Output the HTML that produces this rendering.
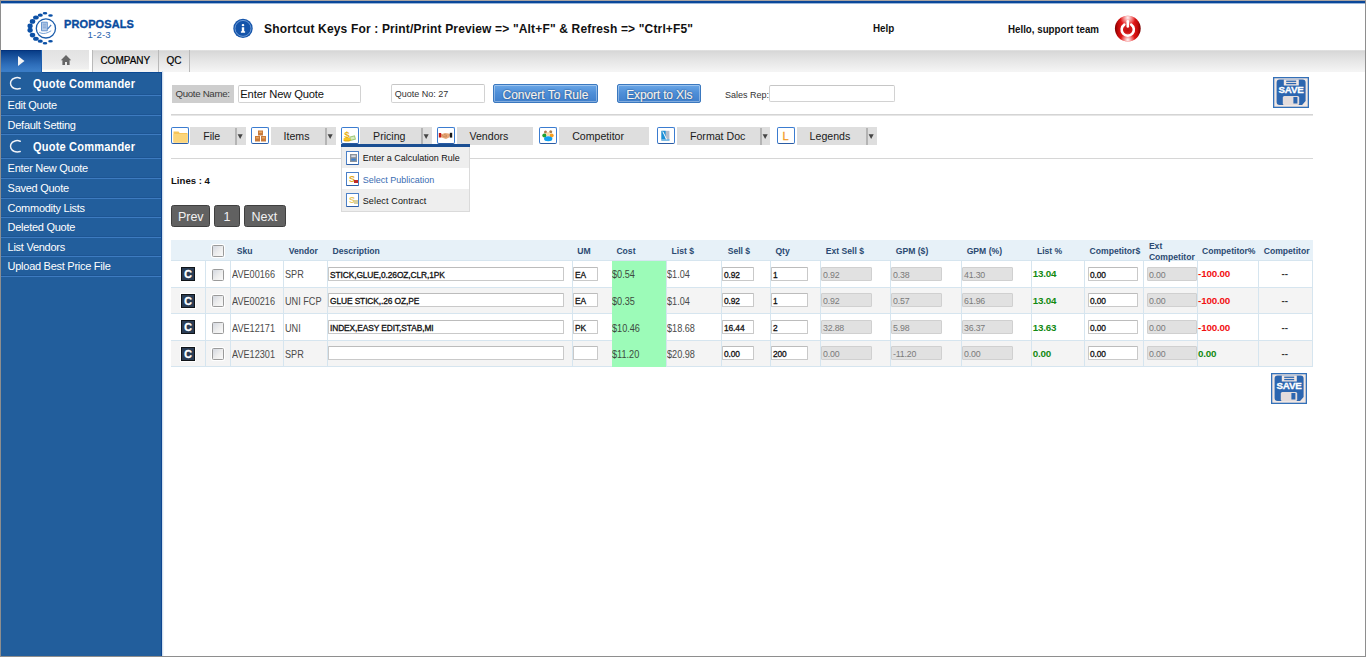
<!DOCTYPE html>
<html><head><meta charset="utf-8">
<style>
*{box-sizing:border-box;margin:0;padding:0}
html,body{width:1366px;height:657px;overflow:hidden;background:#fff}
body{position:relative;font-family:"Liberation Sans",sans-serif;color:#000}
.a{position:absolute}
.t{position:absolute;white-space:nowrap;line-height:1}
/* frame */
#fr{left:0;top:0;width:1366px;height:657px;border:1px solid #8e8e8e;border-top-color:#a9a3a1}
#topbar{left:1px;top:1px;width:1364px;height:2px;background:#0a4799}
#topbar2{left:1px;top:3px;width:1364px;height:1px;background:#9bb7da}
/* nav */
#nav{left:1px;top:50px;width:1364px;height:22px;background:linear-gradient(#e4e4e4 0px,#d7d7d7 1.5px,#dcdcdc 4px,#e6e6e6 11px,#f0f0f0 18px,#f4f4f4 21px)}
#navblue{left:1px;top:50px;width:41px;height:22px;background:linear-gradient(#022c74 0px,#093f8a 1.5px,#1d57a2 8px,#2f6fbb 15px,#3a7cc6 20px,#3a7cc6 22px);box-shadow:inset -1px 0 0 #1f5fae}
#navhome{left:42px;top:50px;width:47px;height:22px;background:linear-gradient(#e2e2e2,#e8e8e8 50%,#f0f0f0 19px,#fcfcf6 20px)}
#navgap{left:89px;top:50px;width:3px;height:22px;background:#fff}
.nsep{position:absolute;top:50px;width:1px;height:22px;background:#b9b9b9}
/* sidebar */
#side{left:1px;top:72px;width:161px;height:584px;background:#225e9c;border-right:1px solid #0d4590}
.sl{position:absolute;left:1px;width:160px;height:1px;background:#3d7bc0}
.sd{position:absolute;left:1px;width:160px;height:1px;background:#1d5593}
.st{position:absolute;white-space:nowrap;line-height:1;color:#fff;font-size:11px;left:7.6px;letter-spacing:-0.27px}
.sh{position:absolute;white-space:nowrap;line-height:1;color:#fff;font-size:12px;font-weight:bold;left:33.2px;letter-spacing:0.2px;transform:scaleX(0.92);transform-origin:0 0}
</style></head><body>
<div id="fr" class="a"></div>
<div id="topbar" class="a"></div>
<div id="topbar2" class="a"></div>

<!-- logo -->
<svg class="a" style="left:24px;top:8px" width="40" height="40" viewBox="0 0 40 40">
 <g fill="#0b50a6">
  <ellipse cx="21" cy="5.2" rx="2.31" ry="1.27"/>
  <ellipse cx="26.5" cy="7.6" rx="2.31" ry="1.27"/>
  <ellipse cx="16.3" cy="7.2" rx="2.53" ry="1.58"/>
  <ellipse cx="11.9" cy="9.6" rx="2.84" ry="2.01"/>
  <ellipse cx="8.5" cy="13.4" rx="2.74" ry="2.33"/>
  <ellipse cx="6.1" cy="18" rx="2.63" ry="2.43"/>
  <ellipse cx="6.1" cy="22.3" rx="2.63" ry="2.43"/>
  <ellipse cx="8.5" cy="27.1" rx="2.74" ry="2.33"/>
  <ellipse cx="11.9" cy="30.8" rx="2.84" ry="2.01"/>
  <ellipse cx="16.3" cy="33.2" rx="2.53" ry="1.58"/>
  <ellipse cx="21" cy="35.3" rx="2.31" ry="1.27"/>
  <ellipse cx="26.5" cy="33.2" rx="2.31" ry="1.27"/>
 </g>
 <circle cx="21.9" cy="20.4" r="9.6" fill="none" stroke="#1a5cab" stroke-width="1.3"/>
 <g fill="none" stroke="#5a8ccc" stroke-width="0.9">
  <path d="M17.5 14.2h5.8v8.6h-5.8z" fill="#b8cde8"/>
  <path d="M18.8 16.2h3.3M18.8 18h3.3M18.8 19.8h3.3" stroke="#7a9ed0"/>
  <path d="M15.2 24.2c2 1.6 5.5 1.8 9 .2l3-1.6" stroke="#6a98d0"/>
  <path d="M23.5 21.2l3.6-4.2" stroke="#4a7cc0" stroke-width="1.2"/>
 </g>
</svg>
<div class="t" style="left:64px;top:19.4px;font-size:11px;font-weight:bold;color:#0a4c9e;letter-spacing:0.1px;-webkit-text-stroke:0.35px #0a4c9e">PROPOSALS</div>
<div class="t" style="left:87.6px;top:30.2px;font-size:9.6px;color:#2a64ac;letter-spacing:0.15px">1-2-3</div>

<!-- info icon -->
<svg class="a" style="left:232px;top:18px" width="22" height="22" viewBox="0 0 22 22">
 <circle cx="11" cy="10.4" r="9.7" fill="#1454aa"/>
 <circle cx="11" cy="10.4" r="8" fill="none" stroke="#8fb4e4" stroke-width="0.7"/>
 <ellipse cx="11" cy="7.2" rx="1.3" ry="1.1" fill="#fff"/>
 <path d="M9.8 9.2h2.4v4h0.9v1.5H8.9v-1.5h0.9z" fill="#fff"/>
</svg>
<div class="t" style="left:264px;top:23.2px;font-size:12px;font-weight:bold;color:#111;letter-spacing:0.16px">Shortcut Keys For : Print/Print Preview =&gt; "Alt+F" &amp; Refresh =&gt; "Ctrl+F5"</div>
<div class="t" style="left:873.4px;top:22.6px;font-size:11px;font-weight:bold;color:#111;transform:scaleX(0.895);transform-origin:0 0">Help</div>
<div class="t" style="left:1007.8px;top:23.8px;font-size:10.6px;font-weight:bold;color:#111;transform:scaleX(0.92);transform-origin:0 0">Hello, support team</div>
<!-- power -->
<svg class="a" style="left:1114px;top:15px" width="28" height="28" viewBox="0 0 28 28">
 <defs>
  <linearGradient id="ph" x1="0" y1="0" x2="1" y2="0">
   <stop offset="0" stop-color="#7a0000"/>
   <stop offset="0.12" stop-color="#c00808"/>
   <stop offset="0.3" stop-color="#e81a1a"/>
   <stop offset="0.5" stop-color="#f03030"/>
   <stop offset="0.7" stop-color="#e81a1a"/>
   <stop offset="0.88" stop-color="#c00808"/>
   <stop offset="1" stop-color="#7a0000"/>
  </linearGradient>
  <radialGradient id="pt" cx="50%" cy="8%" r="30%">
   <stop offset="0" stop-color="#fff" stop-opacity="0.95"/>
   <stop offset="1" stop-color="#fff" stop-opacity="0"/>
  </radialGradient>
  <radialGradient id="pb" cx="50%" cy="94%" r="28%">
   <stop offset="0" stop-color="#fff" stop-opacity="0.95"/>
   <stop offset="1" stop-color="#fff" stop-opacity="0"/>
  </radialGradient>
  <radialGradient id="pc" cx="50%" cy="55%" r="40%">
   <stop offset="0" stop-color="#b80c0c"/>
   <stop offset="1" stop-color="#d81818" stop-opacity="0"/>
  </radialGradient>
 </defs>
 <circle cx="13.8" cy="13.6" r="12.9" fill="url(#ph)"/>
 <circle cx="13.8" cy="13.6" r="12.9" fill="url(#pc)"/>
 <circle cx="13.8" cy="13.6" r="12.9" fill="url(#pt)"/>
 <circle cx="13.8" cy="13.6" r="12.9" fill="url(#pb)"/>
 <path d="M10.3 9.6a6.1 6.1 0 1 0 6.9 0" fill="none" stroke="#fff" stroke-width="2.6" stroke-linecap="round"/>
 <path d="M13.8 6.2v5.2" stroke="#fff" stroke-width="2.6" stroke-linecap="round"/>
</svg>

<!-- nav -->
<div id="nav" class="a"></div>
<div id="navblue" class="a"></div>
<svg class="a" style="left:17px;top:55px" width="9" height="12" viewBox="0 0 9 12"><path d="M1 1l6.5 5-6.5 5z" fill="#f4f4f4"/></svg>
<div id="navhome" class="a"></div>
<svg class="a" style="left:60px;top:54px" width="12" height="12" viewBox="0 0 12 12"><path d="M6 1L0.8 6.2h1.6V11h2.6V8h2v3h2.6V6.2h1.6z" fill="#666"/></svg>
<div id="navgap" class="a"></div>
<div class="nsep" style="left:92px"></div>
<div class="nsep" style="left:158px"></div>
<div class="nsep" style="left:189px"></div>
<div class="t" style="left:100.4px;top:56.3px;font-size:10px;color:#000;-webkit-text-stroke:0.2px #000">COMPANY</div>
<div class="t" style="left:166.4px;top:56.3px;font-size:10px;color:#000;-webkit-text-stroke:0.2px #000">QC</div>

<!-- sidebar -->
<div id="side" class="a"></div>
<div class="a" style="left:42px;top:72px;width:119px;height:1px;background:#0b4a94"></div>
<div class="a" style="left:162px;top:71px;width:1px;height:585px;background:#d2e0ee"></div><div class="a" style="left:163px;top:71px;width:1px;height:585px;background:#f1f5fa"></div>
<div class="sd" style="top:94px"></div><div class="sl" style="top:95px"></div>
<div class="sd" style="top:114px"></div><div class="sl" style="top:115px"></div>
<div class="sd" style="top:133px"></div><div class="sl" style="top:134px"></div>
<div class="sd" style="top:157px"></div><div class="sl" style="top:158px"></div>
<div class="sd" style="top:177px"></div><div class="sl" style="top:178px"></div>
<div class="sd" style="top:197px"></div><div class="sl" style="top:198px"></div>
<div class="sd" style="top:216px"></div><div class="sl" style="top:217px"></div>
<div class="sd" style="top:236px"></div><div class="sl" style="top:237px"></div>
<div class="sd" style="top:255px"></div><div class="sl" style="top:256px"></div>
<div class="sd" style="top:275px"></div><div class="sl" style="top:276px"></div>
<svg class="a" style="left:8px;top:75px" width="15" height="16" viewBox="0 0 15 16"><path d="M12.2 3.2C9 2 4.5 2.6 2.9 6.2 1.8 8.8 3 12 6 13.3 8 14.1 10.5 14 12.2 13.6" fill="none" stroke="#f2f4f8" stroke-width="1.5" stroke-linecap="round"/></svg>
<svg class="a" style="left:8px;top:138px" width="15" height="16" viewBox="0 0 15 16"><path d="M12.2 3.2C9 2 4.5 2.6 2.9 6.2 1.8 8.8 3 12 6 13.3 8 14.1 10.5 14 12.2 13.6" fill="none" stroke="#f2f4f8" stroke-width="1.5" stroke-linecap="round"/></svg>
<div class="sh" style="top:77.7px">Quote Commander</div>
<div class="st" style="top:99.5px">Edit Quote</div>
<div class="st" style="top:119.5px">Default Setting</div>
<div class="sh" style="top:141.1px">Quote Commander</div>
<div class="st" style="top:162.5px">Enter New Quote</div>
<div class="st" style="top:182.5px">Saved Quote</div>
<div class="st" style="top:202.5px">Commodity Lists</div>
<div class="st" style="top:221.5px">Deleted Quote</div>
<div class="st" style="top:241.5px">List Vendors</div>
<div class="st" style="top:260.5px">Upload Best Price File</div>

<!-- CONTENT -->
<style>
.lbl{position:absolute;background:#cecece}
.inp{position:absolute;background:#fff;border:1px solid #d2d2d2;border-top-color:#c6c6c6;border-radius:2px}
.btnb{position:absolute;border:1px solid #3a78bf;border-radius:2px;background:linear-gradient(#6aa6e6,#4f8fd8 45%,#3f7fcc);box-shadow:inset 0 0 0 1px rgba(255,255,255,0.35)}
.bt{position:absolute;white-space:nowrap;line-height:1;color:#f4f4f4;font-size:12px;text-shadow:0 0 1.5px #17457f,0 0 1px #17457f;-webkit-text-stroke:0.2px #f4f4f4}
.hr{position:absolute;left:171px;width:1142px;height:2px;background:linear-gradient(#d4d4d4 50%,#e6e6e6 50%)}
.ib{position:absolute;width:17.5px;height:17.4px;border:1.2px solid #3b7cd0;border-bottom:1.6px solid #2a5ca4;border-radius:2px;background:#fff}
.tb{position:absolute;top:127px;height:18px;background:#dedede}
.tsep{position:absolute;top:128px;width:2px;height:17px;background:#b4b4b4}
.arr{position:absolute;top:134px;width:0;height:0;margin-left:1.3px;border-left:2.6px solid transparent;border-right:2.6px solid transparent;border-top:5px solid #454545}
.tt{position:absolute;white-space:nowrap;line-height:1;color:#1a1a1a;font-size:10.6px}
.mi{position:absolute;left:342px;width:127px}
.mic{position:absolute;left:346px;width:13px;height:13.5px;border:1px solid #4a80c8;border-bottom:1.5px solid #2c5ea6;border-radius:1px;background:#fff}
.mt{position:absolute;white-space:nowrap;line-height:1;font-size:9px;color:#111}
.pg{position:absolute;top:205px;height:22px;background:#616161;border:1px solid #3f3f3f;border-radius:2.5px}
.pt{position:absolute;white-space:nowrap;line-height:1;color:#f2f2f2;font-size:12.5px}
</style>
<!-- row 1 -->
<div class="lbl" style="left:172px;top:85px;width:62px;height:18px"></div>
<div class="t" style="left:175.4px;top:89.1px;font-size:9.7px;color:#3a3a3a;letter-spacing:-0.3px">Quote Name:</div>
<div class="inp" style="left:238px;top:85px;width:123px;height:18px"></div>
<div class="t" style="left:240.3px;top:88.9px;font-size:11.2px;color:#111;letter-spacing:-0.15px">Enter New Quote</div>
<div class="inp" style="left:391px;top:84px;width:94px;height:19px"></div>
<div class="t" style="left:394.8px;top:89.8px;font-size:9px;color:#333">Quote No: 27</div>
<div class="btnb" style="left:493px;top:84px;width:105px;height:19px"></div>
<div class="bt" style="left:502.5px;top:89.1px">Convert To Rule</div>
<div class="btnb" style="left:617px;top:84px;width:84px;height:19px"></div>
<div class="bt" style="left:626.2px;top:89.1px;letter-spacing:-0.15px">Export to Xls</div>
<div class="t" style="left:725px;top:90.8px;font-size:9px;color:#333">Sales Rep:</div>
<div class="inp" style="left:769px;top:85px;width:126px;height:17px"></div>
<svg class="a save" style="left:1273px;top:77px" width="36" height="31" viewBox="0 0 36 31">
 <rect x="0.5" y="0.5" width="35" height="30" fill="#f1e7e3" stroke="#3370b8" stroke-width="1.6"/>
 <path d="M3.6 5.5a3 3 0 0 1 3-3h23a3 3 0 0 1 3 3V24l-3.5 3.9H6.6a3 3 0 0 1-3-3z" fill="#2c66b0"/>
 <rect x="10.8" y="2.5" width="15" height="6" fill="#f1e7e3"/>
 <rect x="13.2" y="3.6" width="10" height="1.3" fill="#2c66b0"/>
 <rect x="13.2" y="5.9" width="10" height="1.3" fill="#2c66b0"/>
 <rect x="9.8" y="19" width="16.4" height="8.9" rx="1.5" fill="#e3dcdc"/>
 <rect x="20.4" y="20" width="4" height="6.5" fill="#2c66b0"/>
 <text x="18" y="16.4" text-anchor="middle" font-family="Liberation Sans" font-weight="bold" font-size="9.8" fill="#fff" stroke="#fff" stroke-width="0.3" letter-spacing="-0.3">SAVE</text>
</svg>
<div class="hr" style="top:114px"></div>

<!-- toolbar -->
<div class="tb" style="left:190px;width:56px"></div>
<div class="tsep" style="left:235px"></div>
<svg class="a" style="left:235px;top:133px" width="10" height="8" viewBox="0 0 10 8"><path d="M2.6 1.2h5.1L5.15 6z" fill="#454545"/></svg>
<div class="ib" style="left:171px;top:127px"><svg class="a" style="left:1px;top:2px" width="15" height="13" viewBox="0 0 15 13"><path d="M0.5 1.5h5l1.2 1.5H14.5v9.5H0.5z" fill="#f7c55a"/><path d="M0.5 4h14v8.5H0.5z" fill="#fbd57a"/></svg></div>
<div class="tt" style="left:203.2px;top:130.9px">File</div>
<div class="tb" style="left:271px;width:65px"></div>
<div class="tsep" style="left:325px"></div>
<svg class="a" style="left:325px;top:133px" width="10" height="8" viewBox="0 0 10 8"><path d="M2.6 1.2h5.1L5.15 6z" fill="#454545"/></svg>
<div class="ib" style="left:251px;top:127px"><svg class="a" style="left:1px;top:1px" width="15" height="14" viewBox="0 0 15 14"><g fill="#c77a3c"><rect x="5" y="1.5" width="5" height="5"/><rect x="2" y="7" width="5" height="5.5"/><rect x="8" y="7" width="5" height="5.5"/></g><g fill="#e9a35e"><rect x="6" y="2.5" width="3" height="1.5"/><rect x="3" y="8" width="3" height="1.5"/><rect x="9" y="8" width="3" height="1.5"/></g></svg></div>
<div class="tt" style="left:283.6px;top:130.9px">Items</div>
<div class="tb" style="left:360px;width:72px"></div>
<div class="tsep" style="left:421px"></div>
<svg class="a" style="left:421px;top:133px" width="10" height="8" viewBox="0 0 10 8"><path d="M2.6 1.2h5.1L5.15 6z" fill="#454545"/></svg>
<div class="ib" style="left:341px;top:127px"><svg class="a" style="left:0px;top:0px" width="15" height="15" viewBox="0 0 15 15"><rect x="7.5" y="8" width="6" height="4.5" fill="#9fc87a" transform="rotate(-15 10 10)"/><rect x="8.5" y="9" width="4" height="2.5" fill="#d8ecc0" transform="rotate(-15 10 10)"/><ellipse cx="5" cy="12.3" rx="3.6" ry="1.3" fill="#e8a810"/><ellipse cx="5" cy="11" rx="3.6" ry="1.3" fill="#f8c820"/><text x="2.2" y="9.6" font-family="Liberation Sans" font-weight="bold" font-size="9.5" fill="#e8b010">$</text></svg></div>
<div class="tt" style="left:373.1px;top:130.9px">Pricing</div>
<div class="tb" style="left:457px;width:76px"></div>
<div class="ib" style="left:437px;top:127px"><svg class="a" style="left:0px;top:2px" width="15" height="12" viewBox="0 0 15 12"><path d="M1.5 3.5l2.5 0.5 3-1 3.5 0.5 2 1-1.5 3-3 1.5-3-1-3.5-1.5z" fill="#e8a878"/><path d="M4 5.5l3 1.5 2-0.5M6 4.5l3 1" stroke="#b87848" stroke-width="0.6" fill="none"/><path d="M0.8 3h2.4v4.5H0.8z" fill="#c01818"/><path d="M11.8 2.8h2.4v4.8h-2.4z" fill="#181818"/></svg></div>
<div class="tt" style="left:469.5px;top:130.9px">Vendors</div>
<div class="tb" style="left:559px;width:90px"></div>
<div class="ib" style="left:539px;top:127px"><svg class="a" style="left:0px;top:0px" width="15" height="15" viewBox="0 0 15 15"><circle cx="5.5" cy="3.9" r="1.5" fill="#b07850"/><circle cx="10.7" cy="3.8" r="1.5" fill="#a88050"/><circle cx="4.4" cy="7.5" r="2.1" fill="#20a030"/><circle cx="11.6" cy="7.5" r="2.1" fill="#f8a020"/><circle cx="8" cy="6" r="2" fill="#f8d8a8"/><ellipse cx="8.2" cy="10.8" rx="4.2" ry="2.5" fill="#10a0f0"/></svg></div>
<div class="tt" style="left:572.2px;top:130.9px">Competitor</div>
<div class="tb" style="left:677px;width:93px"></div>
<div class="tsep" style="left:760px"></div>
<svg class="a" style="left:760px;top:133px" width="10" height="8" viewBox="0 0 10 8"><path d="M2.6 1.2h5.1L5.15 6z" fill="#454545"/></svg>
<div class="ib" style="left:657px;top:127px"><svg class="a" style="left:0px;top:0px" width="15" height="15" viewBox="0 0 15 15"><rect x="3.4" y="2.8" width="8" height="10" fill="#b4bccb"/><rect x="3.4" y="2.8" width="4.2" height="8.5" fill="#1a90d8"/><rect x="3.4" y="11" width="8" height="1.8" fill="#70b8e8"/><path d="M4.8 3.6L8.6 11.4" stroke="#fff" stroke-width="1"/></svg></div>
<div class="tt" style="left:690px;top:130.9px">Format Doc</div>
<div class="tb" style="left:797px;width:80px"></div>
<div class="tsep" style="left:866px"></div>
<svg class="a" style="left:866px;top:133px" width="10" height="8" viewBox="0 0 10 8"><path d="M2.6 1.2h5.1L5.15 6z" fill="#454545"/></svg>
<div class="ib" style="left:777px;top:127px"><div class="t" style="left:4.6px;top:3.2px;font-size:11px;color:#f39a1e;-webkit-text-stroke:0.3px #f39a1e">L</div></div>
<div class="tt" style="left:809.6px;top:130.9px">Legends</div>

<div class="hr" style="top:158px;height:1px;background:#d6d6d6"></div>

<!-- dropdown -->
<div class="a" style="left:341px;top:146px;width:129px;height:66px;background:#eee;border:1px solid #dadada;border-top:0"></div>
<div class="a" style="left:342px;top:168px;width:127px;height:21px;background:#fff"></div>
<div class="a" style="left:341px;top:144px;width:129px;height:3px;background:#1a4e92"></div>
<div class="mic" style="top:151px"><svg class="a" style="left:2.5px;top:2px" width="7" height="8" viewBox="0 0 7 8"><rect x="0" y="0" width="7" height="8" fill="#8a929c"/><rect x="1.3" y="1.3" width="4.4" height="1.8" fill="#d8dce4"/><rect x="1.3" y="4.6" width="4.4" height="2" fill="#3a80d0"/></svg></div>
<div class="mt" style="left:362.7px;top:153.8px">Enter a Calculation Rule</div>
<div class="mic" style="top:172px"><svg class="a" style="left:1px;top:0px" width="11" height="11" viewBox="0 0 11 11"><text x="1" y="9" font-family="Liberation Sans" font-weight="bold" font-size="9" fill="#e0a820">S</text><rect x="6" y="7" width="4" height="3" fill="#c02a2a"/></svg></div>
<div class="mt" style="left:362.7px;top:176px;color:#3a6cb2">Select Publication</div>
<div class="mic" style="top:193px"><svg class="a" style="left:1px;top:0px" width="11" height="11" viewBox="0 0 11 11"><text x="1" y="9" font-family="Liberation Sans" font-weight="bold" font-size="9" fill="#e8c860">S</text><rect x="6" y="6" width="4" height="4" fill="#d8d0a0"/></svg></div>
<div class="mt" style="left:362.7px;top:196.8px;letter-spacing:0.15px">Select Contract</div>

<!-- lines / pager -->
<div class="t" style="left:171px;top:176.1px;font-size:9.6px;font-weight:bold;color:#111">Lines : 4</div>
<div class="pg" style="left:171px;width:39px"></div><div class="pt" style="left:177.9px;top:210.8px">Prev</div>
<div class="pg" style="left:214px;width:26px"></div><div class="pt" style="left:223.5px;top:210.8px">1</div>
<div class="pg" style="left:244px;width:42px"></div><div class="pt" style="left:251.5px;top:210.8px">Next</div>

<!-- TABLE -->
<style>.tc{position:absolute;white-space:nowrap;line-height:1}.th{position:absolute;white-space:nowrap;line-height:1;font-size:8.6px;font-weight:bold;color:#2b4a72}.ti{position:absolute;height:14px;background:#fff;border:1px solid #c9c9c9;border-top-color:#bcbcbc;border-radius:1px}.td{background:#e1e1e1;border-color:#d0d0d0}.it{position:absolute;white-space:nowrap;line-height:1;font-size:8.4px;color:#111;letter-spacing:-0.1px;-webkit-text-stroke:0.3px #111}.dt{position:absolute;white-space:nowrap;line-height:1;font-size:8.8px;color:#7a7a7a;letter-spacing:-0.2px}.cb{position:absolute;width:12px;height:12px;border:1px solid #9a9a9a;border-radius:1.5px;background:linear-gradient(135deg,#d4d8e0,#eeeeee 55%,#fafafa);box-shadow:0 0 0 1px #fff}.ci{position:absolute;left:181px;width:14px;height:14px;background:#2a3c54;border:1px solid #101418;box-shadow:0 0 0 1px #fff}.ci span{position:absolute;left:2.2px;top:1.3px;font-size:10.6px;font-weight:bold;color:#fff;line-height:1;-webkit-text-stroke:0.4px #fff}</style>
<div class="a" style="left:171px;top:240px;width:1142px;height:20px;background:#e7f1f8"></div>
<div class="a" style="left:171px;top:260px;width:1142px;height:1px;background:#d6e5ef"></div>
<div class="a" style="left:171px;top:261px;width:1141px;height:27px;background:#fff"></div>
<div class="a" style="left:171px;top:288px;width:1141px;height:26px;background:#f4f4f4"></div>
<div class="a" style="left:171px;top:314px;width:1141px;height:27px;background:#fff"></div>
<div class="a" style="left:171px;top:341px;width:1141px;height:26px;background:#f4f4f4"></div>
<div class="a" style="left:171px;top:287px;width:1142px;height:1px;background:#d6e5ef"></div>
<div class="a" style="left:171px;top:313px;width:1142px;height:1px;background:#d6e5ef"></div>
<div class="a" style="left:171px;top:340px;width:1142px;height:1px;background:#d6e5ef"></div>
<div class="a" style="left:171px;top:366px;width:1142px;height:1px;background:#d6e5ef"></div>
<div class="a" style="left:205px;top:261px;width:1px;height:106px;background:#d6e5ef"></div>
<div class="a" style="left:230px;top:261px;width:1px;height:106px;background:#d6e5ef"></div>
<div class="a" style="left:283px;top:261px;width:1px;height:106px;background:#d6e5ef"></div>
<div class="a" style="left:327px;top:261px;width:1px;height:106px;background:#d6e5ef"></div>
<div class="a" style="left:572px;top:261px;width:1px;height:106px;background:#d6e5ef"></div>
<div class="a" style="left:612px;top:261px;width:1px;height:106px;background:#d6e5ef"></div>
<div class="a" style="left:666px;top:261px;width:1px;height:106px;background:#d6e5ef"></div>
<div class="a" style="left:721px;top:261px;width:1px;height:106px;background:#d6e5ef"></div>
<div class="a" style="left:770px;top:261px;width:1px;height:106px;background:#d6e5ef"></div>
<div class="a" style="left:820px;top:261px;width:1px;height:106px;background:#d6e5ef"></div>
<div class="a" style="left:890px;top:261px;width:1px;height:106px;background:#d6e5ef"></div>
<div class="a" style="left:961px;top:261px;width:1px;height:106px;background:#d6e5ef"></div>
<div class="a" style="left:1031px;top:261px;width:1px;height:106px;background:#d6e5ef"></div>
<div class="a" style="left:1084px;top:261px;width:1px;height:106px;background:#d6e5ef"></div>
<div class="a" style="left:1143px;top:261px;width:1px;height:106px;background:#d6e5ef"></div>
<div class="a" style="left:1197px;top:261px;width:1px;height:106px;background:#d6e5ef"></div>
<div class="a" style="left:1258px;top:261px;width:1px;height:106px;background:#d6e5ef"></div>
<div class="a" style="left:1312px;top:261px;width:1px;height:106px;background:#d6e5ef"></div>
<div class="a" style="left:612px;top:261px;width:54px;height:106px;background:#9cfbb8"></div>
<div class="th" style="left:236.7px;top:247.1px">Sku</div>
<div class="th" style="left:288.7px;top:247.1px">Vendor</div>
<div class="th" style="left:332.5px;top:247.1px">Description</div>
<div class="th" style="left:577.3px;top:247.1px">UM</div>
<div class="th" style="left:616.4px;top:247.1px">Cost</div>
<div class="th" style="left:671.5px;top:247.1px">List $</div>
<div class="th" style="left:727.7px;top:247.1px">Sell $</div>
<div class="th" style="left:775.4px;top:247.1px">Qty</div>
<div class="th" style="left:825.8px;top:247.1px">Ext Sell $</div>
<div class="th" style="left:895.8px;top:247.1px">GPM ($)</div>
<div class="th" style="left:966.7px;top:247.1px">GPM (%)</div>
<div class="th" style="left:1036.9px;top:247.1px">List %</div>
<div class="th" style="left:1089.6px;top:247.1px">Competitor$</div>
<div class="th" style="left:1202px;top:247.1px">Competitor%</div>
<div class="th" style="left:1263.7px;top:247.1px">Competitor</div>
<div class="th" style="left:1148.9px;top:241.9px">Ext</div>
<div class="th" style="left:1148.9px;top:253.3px">Competitor</div>
<div class="cb" style="left:212px;top:245px"></div>
<div class="ci" style="top:267px"><span>C</span></div>
<div class="cb" style="left:212px;top:269px"></div>
<div class="tc" style="left:231.5px;top:268.8px;font-size:11px;color:#4a4a4a;transform:scaleX(0.83);transform-origin:0 0">AVE00166</div>
<div class="tc" style="left:284.6px;top:268.8px;font-size:11px;color:#4a4a4a;transform:scaleX(0.83);transform-origin:0 0">SPR</div>
<div class="ti" style="left:328px;top:267px;width:236px"></div>
<div class="it" style="left:330px;top:270.6px">STICK,GLUE,0.26OZ,CLR,1PK</div>
<div class="ti" style="left:573px;top:267px;width:25px"></div>
<div class="it" style="left:575px;top:270.6px">EA</div>
<div class="ti" style="left:722px;top:267px;width:32px"></div>
<div class="it" style="left:724px;top:270.6px">0.92</div>
<div class="ti" style="left:771px;top:267px;width:37px"></div>
<div class="it" style="left:773px;top:270.6px">1</div>
<div class="ti td" style="left:821px;top:267px;width:51px"></div>
<div class="dt" style="left:823px;top:270.6px">0.92</div>
<div class="ti td" style="left:891px;top:267px;width:51px"></div>
<div class="dt" style="left:893px;top:270.6px">0.38</div>
<div class="ti td" style="left:962px;top:267px;width:51px"></div>
<div class="dt" style="left:964px;top:270.6px">41.30</div>
<div class="ti" style="left:1088px;top:267px;width:50px"></div>
<div class="it" style="left:1090px;top:270.6px">0.00</div>
<div class="ti td" style="left:1147px;top:267px;width:50px"></div>
<div class="dt" style="left:1149px;top:270.6px">0.00</div>
<div class="tc" style="left:612.2px;top:268.8px;font-size:11px;color:#3d4a40;transform:scaleX(0.83);transform-origin:0 0">$0.54</div>
<div class="tc" style="left:666.7px;top:268.8px;font-size:11px;color:#4a4a4a;transform:scaleX(0.83);transform-origin:0 0">$1.04</div>
<div class="tc" style="left:1032.8px;top:269.0px;font-size:9.8px;font-weight:bold;color:#128a12;letter-spacing:-0.2px">13.04</div>
<div class="tc" style="left:1198.1px;top:269.0px;font-size:9.8px;font-weight:bold;color:#f21212;letter-spacing:-0.2px">-100.00</div>
<div class="tc" style="left:1281.5px;top:269.0px;font-size:9.8px;font-weight:bold;color:#333">--</div>
<div class="ci" style="top:294px"><span>C</span></div>
<div class="cb" style="left:212px;top:295px"></div>
<div class="tc" style="left:231.5px;top:295.8px;font-size:11px;color:#4a4a4a;transform:scaleX(0.83);transform-origin:0 0">AVE00216</div>
<div class="tc" style="left:284.6px;top:295.8px;font-size:11px;color:#4a4a4a;transform:scaleX(0.83);transform-origin:0 0">UNI FCP</div>
<div class="ti" style="left:328px;top:293px;width:236px"></div>
<div class="it" style="left:330px;top:296.6px">GLUE STICK,.26 OZ,PE</div>
<div class="ti" style="left:573px;top:293px;width:25px"></div>
<div class="it" style="left:575px;top:296.6px">EA</div>
<div class="ti" style="left:722px;top:293px;width:32px"></div>
<div class="it" style="left:724px;top:296.6px">0.92</div>
<div class="ti" style="left:771px;top:293px;width:37px"></div>
<div class="it" style="left:773px;top:296.6px">1</div>
<div class="ti td" style="left:821px;top:293px;width:51px"></div>
<div class="dt" style="left:823px;top:296.6px">0.92</div>
<div class="ti td" style="left:891px;top:293px;width:51px"></div>
<div class="dt" style="left:893px;top:296.6px">0.57</div>
<div class="ti td" style="left:962px;top:293px;width:51px"></div>
<div class="dt" style="left:964px;top:296.6px">61.96</div>
<div class="ti" style="left:1088px;top:293px;width:50px"></div>
<div class="it" style="left:1090px;top:296.6px">0.00</div>
<div class="ti td" style="left:1147px;top:293px;width:50px"></div>
<div class="dt" style="left:1149px;top:296.6px">0.00</div>
<div class="tc" style="left:612.2px;top:295.8px;font-size:11px;color:#3d4a40;transform:scaleX(0.83);transform-origin:0 0">$0.35</div>
<div class="tc" style="left:666.7px;top:295.8px;font-size:11px;color:#4a4a4a;transform:scaleX(0.83);transform-origin:0 0">$1.04</div>
<div class="tc" style="left:1032.8px;top:296.0px;font-size:9.8px;font-weight:bold;color:#128a12;letter-spacing:-0.2px">13.04</div>
<div class="tc" style="left:1198.1px;top:296.0px;font-size:9.8px;font-weight:bold;color:#f21212;letter-spacing:-0.2px">-100.00</div>
<div class="tc" style="left:1281.5px;top:296.0px;font-size:9.8px;font-weight:bold;color:#333">--</div>
<div class="ci" style="top:320px"><span>C</span></div>
<div class="cb" style="left:212px;top:322px"></div>
<div class="tc" style="left:231.5px;top:322.8px;font-size:11px;color:#4a4a4a;transform:scaleX(0.83);transform-origin:0 0">AVE12171</div>
<div class="tc" style="left:284.6px;top:322.8px;font-size:11px;color:#4a4a4a;transform:scaleX(0.83);transform-origin:0 0">UNI</div>
<div class="ti" style="left:328px;top:320px;width:236px"></div>
<div class="it" style="left:330px;top:323.6px">INDEX,EASY EDIT,STAB,MI</div>
<div class="ti" style="left:573px;top:320px;width:25px"></div>
<div class="it" style="left:575px;top:323.6px">PK</div>
<div class="ti" style="left:722px;top:320px;width:32px"></div>
<div class="it" style="left:724px;top:323.6px">16.44</div>
<div class="ti" style="left:771px;top:320px;width:37px"></div>
<div class="it" style="left:773px;top:323.6px">2</div>
<div class="ti td" style="left:821px;top:320px;width:51px"></div>
<div class="dt" style="left:823px;top:323.6px">32.88</div>
<div class="ti td" style="left:891px;top:320px;width:51px"></div>
<div class="dt" style="left:893px;top:323.6px">5.98</div>
<div class="ti td" style="left:962px;top:320px;width:51px"></div>
<div class="dt" style="left:964px;top:323.6px">36.37</div>
<div class="ti" style="left:1088px;top:320px;width:50px"></div>
<div class="it" style="left:1090px;top:323.6px">0.00</div>
<div class="ti td" style="left:1147px;top:320px;width:50px"></div>
<div class="dt" style="left:1149px;top:323.6px">0.00</div>
<div class="tc" style="left:612.2px;top:322.8px;font-size:11px;color:#3d4a40;transform:scaleX(0.83);transform-origin:0 0">$10.46</div>
<div class="tc" style="left:666.7px;top:322.8px;font-size:11px;color:#4a4a4a;transform:scaleX(0.83);transform-origin:0 0">$18.68</div>
<div class="tc" style="left:1032.8px;top:323.0px;font-size:9.8px;font-weight:bold;color:#128a12;letter-spacing:-0.2px">13.63</div>
<div class="tc" style="left:1198.1px;top:323.0px;font-size:9.8px;font-weight:bold;color:#f21212;letter-spacing:-0.2px">-100.00</div>
<div class="tc" style="left:1281.5px;top:323.0px;font-size:9.8px;font-weight:bold;color:#333">--</div>
<div class="ci" style="top:347px"><span>C</span></div>
<div class="cb" style="left:212px;top:348px"></div>
<div class="tc" style="left:231.5px;top:348.8px;font-size:11px;color:#4a4a4a;transform:scaleX(0.83);transform-origin:0 0">AVE12301</div>
<div class="tc" style="left:284.6px;top:348.8px;font-size:11px;color:#4a4a4a;transform:scaleX(0.83);transform-origin:0 0">SPR</div>
<div class="ti" style="left:328px;top:346px;width:236px"></div>
<div class="ti" style="left:573px;top:346px;width:25px"></div>
<div class="ti" style="left:722px;top:346px;width:32px"></div>
<div class="it" style="left:724px;top:349.6px">0.00</div>
<div class="ti" style="left:771px;top:346px;width:37px"></div>
<div class="it" style="left:773px;top:349.6px">200</div>
<div class="ti td" style="left:821px;top:346px;width:51px"></div>
<div class="dt" style="left:823px;top:349.6px">0.00</div>
<div class="ti td" style="left:891px;top:346px;width:51px"></div>
<div class="dt" style="left:893px;top:349.6px">-11.20</div>
<div class="ti td" style="left:962px;top:346px;width:51px"></div>
<div class="dt" style="left:964px;top:349.6px">0.00</div>
<div class="ti" style="left:1088px;top:346px;width:50px"></div>
<div class="it" style="left:1090px;top:349.6px">0.00</div>
<div class="ti td" style="left:1147px;top:346px;width:50px"></div>
<div class="dt" style="left:1149px;top:349.6px">0.00</div>
<div class="tc" style="left:612.2px;top:348.8px;font-size:11px;color:#3d4a40;transform:scaleX(0.83);transform-origin:0 0">$11.20</div>
<div class="tc" style="left:666.7px;top:348.8px;font-size:11px;color:#4a4a4a;transform:scaleX(0.83);transform-origin:0 0">$20.98</div>
<div class="tc" style="left:1032.8px;top:349.0px;font-size:9.8px;font-weight:bold;color:#128a12;letter-spacing:-0.2px">0.00</div>
<div class="tc" style="left:1198.1px;top:349.0px;font-size:9.8px;font-weight:bold;color:#128a12;letter-spacing:-0.2px">0.00</div>
<div class="tc" style="left:1281.5px;top:349.0px;font-size:9.8px;font-weight:bold;color:#333">--</div>
<svg class="a" style="left:1271px;top:373px" width="36" height="31" viewBox="0 0 36 31">
 <rect x="0.5" y="0.5" width="35" height="30" fill="#f1e7e3" stroke="#3370b8" stroke-width="1.6"/>
 <path d="M3.6 5.5a3 3 0 0 1 3-3h23a3 3 0 0 1 3 3V24l-3.5 3.9H6.6a3 3 0 0 1-3-3z" fill="#2c66b0"/>
 <rect x="10.8" y="2.5" width="15" height="6" fill="#f1e7e3"/>
 <rect x="13.2" y="3.6" width="10" height="1.3" fill="#2c66b0"/>
 <rect x="13.2" y="5.9" width="10" height="1.3" fill="#2c66b0"/>
 <rect x="9.8" y="19" width="16.4" height="8.9" rx="1.5" fill="#e3dcdc"/>
 <rect x="20.4" y="20" width="4" height="6.5" fill="#2c66b0"/>
 <text x="18" y="16.4" text-anchor="middle" font-family="Liberation Sans" font-weight="bold" font-size="9.8" fill="#fff" stroke="#fff" stroke-width="0.3" letter-spacing="-0.3">SAVE</text>
</svg>
<!-- /TABLE --><!-- /TABLE --><!-- /TABLE --><!-- /TABLE --><!-- /TABLE --><!-- /TABLE --><!-- /TABLE --><!-- /TABLE --><!-- /TABLE --><!-- /TABLE --><!-- /TABLE --><!-- /TABLE --><!-- /TABLE -->
</body></html>
